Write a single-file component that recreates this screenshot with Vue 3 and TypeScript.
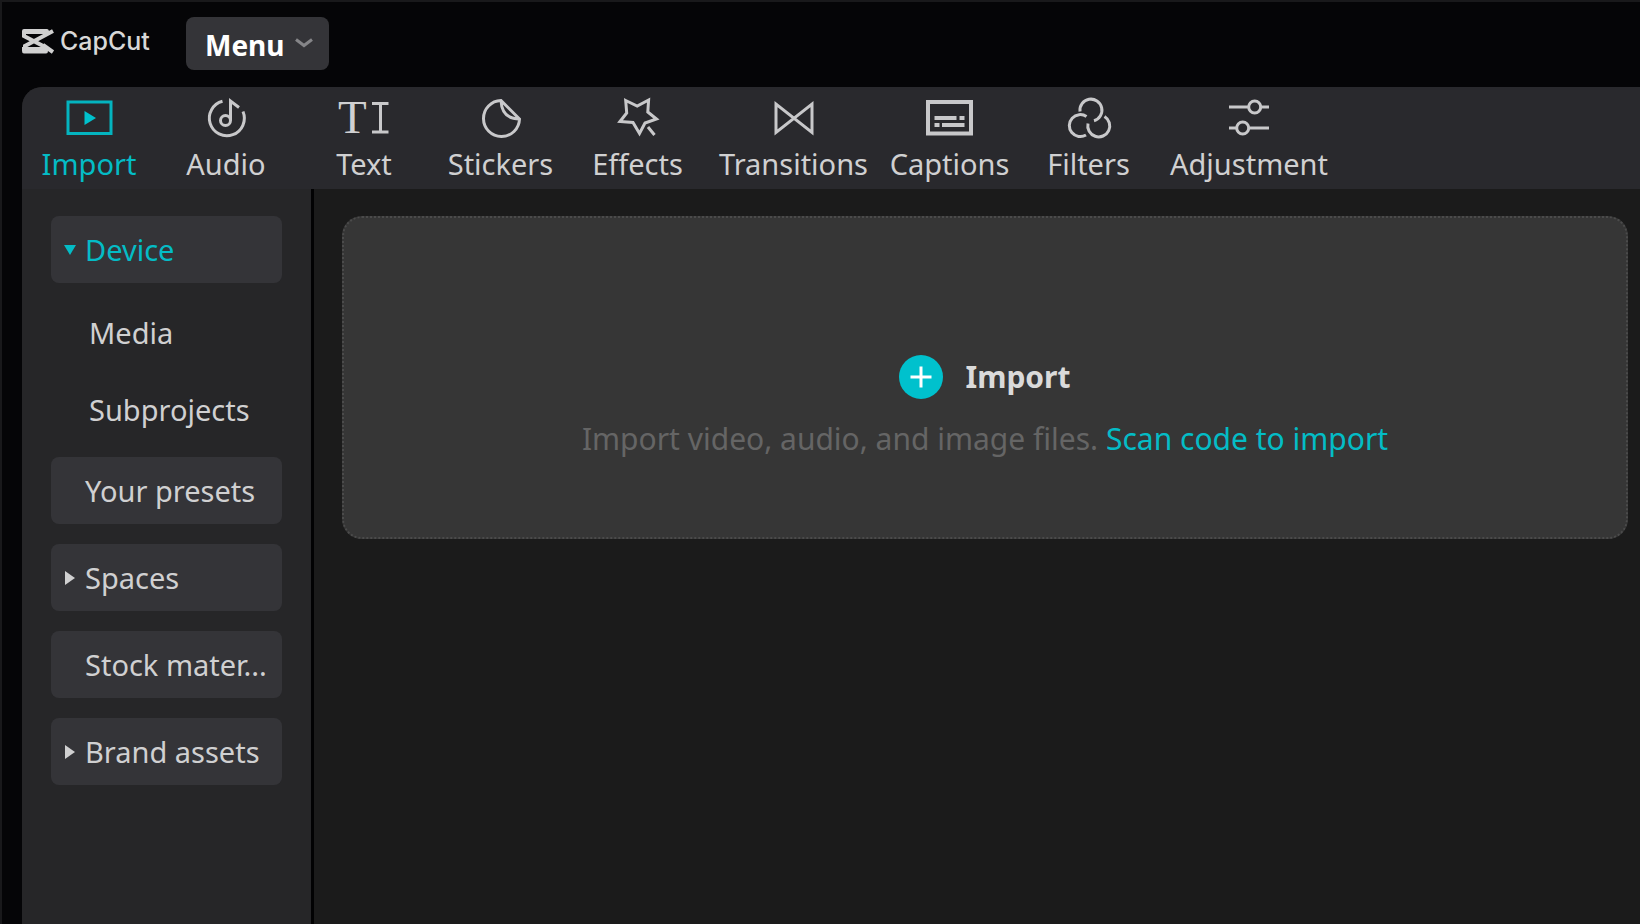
<script setup lang="ts">
import { ref } from 'vue'

interface Tab {
  id: string
  label: string
}

interface Section {
  id: string
  label: string
  expandable: boolean
  children?: string[]
}

const tabs: Tab[] = [
  { id: 'import', label: 'Import' },
  { id: 'audio', label: 'Audio' },
  { id: 'text', label: 'Text' },
  { id: 'stickers', label: 'Stickers' },
  { id: 'effects', label: 'Effects' },
  { id: 'transitions', label: 'Transitions' },
  { id: 'captions', label: 'Captions' },
  { id: 'filters', label: 'Filters' },
  { id: 'adjustment', label: 'Adjustment' },
]

const sections: Section[] = [
  { id: 'device', label: 'Device', expandable: true, children: ['Media', 'Subprojects'] },
  { id: 'presets', label: 'Your presets', expandable: false },
  { id: 'spaces', label: 'Spaces', expandable: true },
  { id: 'stock', label: 'Stock mater...', expandable: false },
  { id: 'brand', label: 'Brand assets', expandable: true },
]

const activeTab = ref('import')
const openSection = ref('device')
</script>

<template>
  <div class="app">
    <header class="titlebar">
      <div class="brand">
        <svg class="brand-mark" viewBox="0 0 32 26" aria-hidden="true">
          <path class="bars" d="M0 3 Q0 1 2 1 H25 Q26.500 1 27 3 V6 H0 Z M0 19 H26 V23 Q26 25.500 24 25.500 H2 Q0 25.500 0 23 Z" />
          <path d="M2 5 V8 L25 20 M31 3 L3 18 V21 M21 17 L31 24" />
        </svg>
        <span class="brand-name">CapCut</span>
      </div>
      <button class="menu" type="button">
        <span>Menu</span>
        <svg class="chevron" viewBox="0 0 20 12" aria-hidden="true"><path d="M2 2.500 L10 8.500 L18 2.500" /></svg>
      </button>
    </header>

    <div class="panel">
      <nav class="toolbar" aria-label="Tools">
        <button
          v-for="tab in tabs"
          :key="tab.id"
          type="button"
          class="tab"
          :class="{ active: tab.id === activeTab }"
          @click="activeTab = tab.id"
        >
          <svg class="icon" viewBox="0 0 48 40" aria-hidden="true">
            <template v-if="tab.id === 'import'">
              <rect x="3" y="4" width="43" height="31.500" />
              <path class="solid" d="M19.500 13 L31 20 L19.500 27 Z" />
            </template>
            <template v-else-if="tab.id === 'audio'">
              <path d="M20.500 3.300 A17.500 17.500 0 1 0 41 13.500" />
              <circle cx="23.500" cy="22.500" r="5" />
              <path d="M28.500 22.500 V3 L37 9.500" />
            </template>
            <template v-else-if="tab.id === 'text'">
              <text x="-2" y="35" class="letter">T</text>
              <path d="M32 5.500 H48.500 M32 34 H48.500 M40.500 5.500 V34" />
            </template>
            <template v-else-if="tab.id === 'stickers'">
              <path d="M24 2.500 A18 18 0 1 0 42.500 21 Z C24.500 14 29.500 21 42.500 21" />
            </template>
            <template v-else-if="tab.id === 'effects'">
              <path
                d="M11.700 2.500 L23.200 8 L34.600 2 L33.800 14 L42.500 21 L31 25 L25.500 35.500 L19 24.500 L6 23.500 L12.700 15 Z M34 29 L40.500 37"
              />
            </template>
            <template v-else-if="tab.id === 'transitions'">
              <path d="M6 6 V34.500 L42 6 V34.500 Z" />
            </template>
            <template v-else-if="tab.id === 'captions'">
              <rect class="frame" x="2" y="4" width="43" height="31.500" />
              <path class="frame" d="M8.500 20 H30.500 M33.500 20 H38.500 M8.500 27 H13.500 M16 27 H38.500" />
            </template>
            <template v-else-if="tab.id === 'filters'">
              <path d="M15 13.500 A11 11 0 1 1 29 22.700" />
              <path d="M21.500 18.500 A11 11 0 1 0 21 37" />
              <path d="M39.500 18.500 A11 11 0 1 1 23 25.500" />
            </template>
            <template v-else>
              <path d="M4 9 H23.500 M36 9 H44 M4 30 H11.500 M24 30 H44" />
              <circle cx="29.700" cy="9" r="6" />
              <circle cx="17.700" cy="30" r="6" />
            </template>
          </svg>
          <span>{{ tab.label }}</span>
        </button>
      </nav>

      <div class="body">
        <aside class="sidebar">
          <template v-for="section in sections" :key="section.id">
            <button
              type="button"
              class="section"
              :class="{ active: section.id === openSection }"
              @click="openSection = section.id"
            >
              <span class="caret">
                <svg v-if="section.expandable" viewBox="0 0 12 14" aria-hidden="true">
                  <path v-if="section.id === openSection" d="M0 2 H12 L6 12 Z" />
                  <path v-else d="M1 0 L11 7 L1 14 Z" />
                </svg>
              </span>
              <span>{{ section.label }}</span>
            </button>
            <div v-if="section.children && section.id === openSection" class="children">
              <button v-for="child in section.children" :key="child" type="button" class="child">{{ child }}</button>
            </div>
          </template>
        </aside>

        <main class="content">
          <section class="dropzone">
            <button class="import" type="button">
              <svg viewBox="0 0 44 44" aria-hidden="true">
                <circle cx="22" cy="22" r="22" />
                <path d="M22 11.500 V32.500 M11.500 22 H32.500" />
              </svg>
              <span>Import</span>
            </button>
            <p class="hint">Import video, audio, and image files. <a href="#scan">Scan code to import</a></p>
          </section>
        </main>
      </div>
    </div>
  </div>
</template>

<style>
body {
  background: #050507;
}
</style>

<style scoped>
.app {
  box-sizing: border-box;
  min-height: 100vh;
  display: flex;
  flex-direction: column;
  border-top: 2px solid #19191b;
  border-left: 2px solid #19191b;
  background: #050507;
  color: #d0d0d1;
  font-family: "Noto Sans", "Open Sans", sans-serif;
  font-size: 29px;
  line-height: 40px;
}

button {
  margin: 0;
  padding: 0;
  border: 0;
  background: none;
  color: inherit;
  font: inherit;
  white-space: nowrap;
  cursor: pointer;
}

.titlebar {
  display: flex;
  align-items: flex-start;
  gap: 34px;
  height: 70px;
  padding: 15px 20px 0;
}

.brand {
  display: flex;
  align-items: center;
  gap: 6px;
  width: 130px;
  height: 48px;
}

.brand-mark {
  flex: none;
  width: 32px;
  height: 26px;
  fill: none;
  stroke: #d0d0d0;
  stroke-width: 4;
}

.bars {
  fill: #d0d0d0;
  stroke: none;
}

.brand-name {
  color: #d8d8d8;
  font-family: Inter, sans-serif;
  font-size: 25px;
  font-weight: 500;
}

.menu {
  display: flex;
  align-items: center;
  gap: 9px;
  height: 53px;
  padding: 3px 15px 0 19px;
  border-radius: 8px;
  background: #343438;
  color: #fff;
  font-size: 28px;
  font-weight: 700;
}

.chevron {
  width: 20px;
  height: 12px;
  margin-bottom: 4px;
  fill: none;
  stroke: #858588;
  stroke-width: 3;
}

.panel {
  flex: 1;
  display: flex;
  flex-direction: column;
  margin-left: 20px;
  border-top-left-radius: 20px;
  overflow: hidden;
  background: #1b1b1b;
}

.toolbar {
  display: grid;
  grid-template-columns: 134px 140px 136px 137px 137px 175px 137px 141px 180px;
  height: 102px;
  background: #29292d;
}

.tab {
  display: flex;
  flex-direction: column;
  align-items: center;
  gap: 6px;
  padding-top: 11px;
}

.icon {
  width: 48px;
  height: 40px;
  overflow: visible;
  fill: none;
  stroke: #c8c8ca;
  stroke-width: 3;
}

.icon .frame {
  stroke-width: 4;
}

.letter {
  font-family: "Liberation Serif", serif;
  font-size: 47px;
  fill: #d0d0d1;
  stroke: none;
}

.tab.active {
  color: #04bcc6;
}

.tab.active .icon {
  stroke: #04b4bf;
}

.icon .solid {
  fill: #00c1cd;
  stroke: none;
}

.body {
  flex: 1;
  display: flex;
}

.sidebar {
  box-sizing: border-box;
  flex: none;
  width: 292px;
  padding: 27px 29px;
  border-right: 3px solid #020203;
  background: #262628;
}

.section {
  display: flex;
  align-items: center;
  width: 100%;
  height: 67px;
  margin-bottom: 20px;
  padding: 0 0 0 13px;
  border-radius: 8px;
  background: #343438;
}

.section.active {
  margin-bottom: 0;
  color: #04bcc6;
}

.caret {
  display: flex;
  width: 21px;
}

.caret svg {
  width: 12px;
  height: 14px;
  fill: currentColor;
}

.children {
  padding: 11px 0 9px;
}

.child {
  display: block;
  width: 100%;
  height: 77px;
  padding-left: 38px;
  text-align: left;
}

.content {
  flex: 1;
  min-width: 0;
  padding: 27px 12px 27px 28px;
}

.dropzone {
  box-sizing: border-box;
  display: flex;
  flex-direction: column;
  align-items: center;
  height: 323px;
  padding-top: 137px;
  border: 2px dotted #4b4b4b;
  border-radius: 20px;
  background: #363636;
  font-size: 30px;
}

.import {
  display: flex;
  align-items: center;
  gap: 22px;
  color: #dadada;
  font-weight: 700;
}

.import svg {
  width: 44px;
  height: 44px;
  fill: #00c1cd;
}

.import path {
  stroke: #fff;
  stroke-width: 3;
}

.hint {
  margin: 20px 0 0;
  color: #656565;
}

.hint a {
  color: #04bcc6;
  text-decoration: none;
}
</style>
